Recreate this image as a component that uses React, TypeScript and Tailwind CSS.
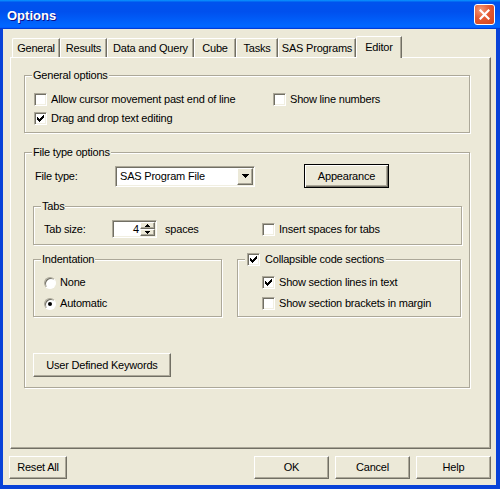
import type { ReactNode } from "react";

// classic 3D edge styles
const raised =
  "border border-t-white border-l-white border-r-[#716f64] border-b-[#716f64] shadow-[inset_-1px_-1px_0_#aca899] bg-[#ece9d8]";
const sunken =
  "border border-t-[#aca899] border-l-[#aca899] border-r-white border-b-white shadow-[inset_1px_1px_0_#716f64,inset_-1px_-1px_0_#f1efe2]";
const etched = "border border-[#aca899] shadow-[inset_1px_1px_0_#fff,1px_1px_0_#fff]";

// 7x7 pixel check glyph, [x, y, width]
const CHECK: [number, number, number][] = [
  [6, 0, 1],
  [5, 1, 2],
  [0, 2, 1],
  [4, 2, 3],
  [0, 3, 2],
  [3, 3, 3],
  [0, 4, 5],
  [1, 5, 3],
  [2, 6, 1],
];

const tabs = [
  { label: "General", w: "w-[48px]" },
  { label: "Results", w: "w-[47px]" },
  { label: "Data and Query", w: "w-[87px]" },
  { label: "Cube", w: "w-[42px]" },
  { label: "Tasks", w: "w-[42px]" },
  { label: "SAS Programs", w: "w-[78px]" },
];

function CheckBox({ checked }: { checked?: boolean }) {
  return (
    <span className={`flex h-[13px] w-[13px] shrink-0 items-center justify-center bg-white ${sunken}`}>
      {checked && (
        <svg width="7" height="7" viewBox="0 0 7 7" shapeRendering="crispEdges">
          {CHECK.map(([x, y, w]) => (
            <rect key={`${x}-${y}`} x={x} y={y} width={w} height={1} fill="#000" />
          ))}
        </svg>
      )}
    </span>
  );
}

function Check({ checked, gap = "gap-[4px]", children }: { checked?: boolean; gap?: string; children: ReactNode }) {
  return (
    <div className={`flex h-[13px] items-center ${gap}`}>
      <CheckBox checked={checked} />
      <span className="whitespace-nowrap">{children}</span>
    </div>
  );
}

function Radio({ checked, children }: { checked?: boolean; children: ReactNode }) {
  return (
    <div className="flex h-[13px] items-center gap-[4px]">
      <span className="flex h-[12px] w-[12px] shrink-0 items-center justify-center rounded-full border border-t-[#aca899] border-l-[#aca899] border-r-white border-b-white bg-white shadow-[inset_1px_1px_0_#716f64]">
        {checked && <span className="h-[4px] w-[4px] rounded-full bg-black" />}
      </span>
      <span className="whitespace-nowrap">{children}</span>
    </div>
  );
}

function Legend({ children }: { children: ReactNode }) {
  return <div className="-mt-[7px] ml-[7px] h-[13px] w-fit bg-[#ece9d8] px-[1px]">{children}</div>;
}

function Combo() {
  return (
    <div className={`flex h-[21px] w-[140px] bg-white p-[1px] ${sunken}`}>
      <span className="flex flex-1 items-center pl-[3px]">SAS Program File</span>
      <span className={`flex w-[16px] items-center justify-center ${raised}`}>
        <svg width="7" height="4" viewBox="0 0 7 4" shapeRendering="crispEdges">
          <path d="M0 0h7L3.5 4z" fill="#000" />
        </svg>
      </span>
    </div>
  );
}

function Spinner() {
  return (
    <div className={`flex h-[18px] w-[45px] bg-white p-[1px] ${sunken}`}>
      <span className="flex flex-1 items-center justify-end pr-[1px]">4</span>
      <div className="flex w-[15px] flex-col">
        <span className={`flex flex-1 items-center justify-center ${raised}`}>
          <svg width="5" height="3" viewBox="0 0 5 3" shapeRendering="crispEdges">
            <path d="M2 0h1v1h1v1h1v1H0V2h1V1h1z" fill="#000" />
          </svg>
        </span>
        <span className={`flex flex-1 items-center justify-center ${raised}`}>
          <svg width="5" height="3" viewBox="0 0 5 3" shapeRendering="crispEdges">
            <path d="M0 0h5v1H4v1H3v1H2V2H1V1H0z" fill="#000" />
          </svg>
        </span>
      </div>
    </div>
  );
}

function Button({ className, children }: { className: string; children: ReactNode }) {
  return <button type="button" className={`text-center ${raised} ${className}`}>{children}</button>;
}

export default function App() {
  return (
    <div className="flex h-[489px] w-[500px] flex-col bg-[#0842d8] font-['Liberation_Sans',Arial,sans-serif] text-[11px] leading-[13px] tracking-[-0.2px] text-black">
      {/* title bar */}
      <div className="flex h-[29px] items-center justify-between bg-[linear-gradient(180deg,#0997ff,#0053ee_8%,#0050ee_40%,#06f_88%,#06f_93%,#005bff_95%,#003dd7_96%,#003dd7)] pl-[7px] pr-[5px]">
        <span className="pt-[2px] text-[13px] font-bold leading-[16px] tracking-normal text-white [text-shadow:1px_1px_0_#0f1089]">
          Options
        </span>
        <span className="flex h-[21px] w-[21px] items-center justify-center rounded-[3px] border border-white bg-[radial-gradient(circle_at_30%_25%,#f59a78_0%,#e45a33_45%,#d2431c_100%)]">
          <svg width="11" height="11" viewBox="0 0 11 11">
            <path d="M1.5 1.5l8 8M9.5 1.5l-8 8" stroke="#fff" strokeWidth="2.2" strokeLinecap="square" />
          </svg>
        </span>
      </div>

      <div className="mb-[4px] ml-[3px] mr-[4px] flex flex-1 flex-col bg-[#ece9d8] pt-[7px]">
        <div className="ml-[7px] w-[481px]">
          {/* tab strip */}
          <div className="flex h-[21px] items-end pl-[2px]">
            {tabs.map((t) => (
              <div
                key={t.label}
                className={`flex h-[19px] items-center justify-center whitespace-nowrap rounded-tl-[2px] border-l border-t border-r border-l-white border-t-white border-r-[#716f64] pt-[1px] shadow-[inset_-1px_0_0_#aca899] ${t.w}`}
              >
                {t.label}
              </div>
            ))}
            <div className="relative z-10 -mb-[1px] flex h-[22px] w-[46px] items-center justify-center rounded-tl-[2px] border-l border-t border-r border-l-white border-t-white border-r-[#716f64] bg-[#ece9d8] shadow-[inset_-1px_0_0_#aca899]">
              Editor
            </div>
          </div>

          {/* tab page */}
          <div className="h-[392px] w-[481px] border border-l-white border-t-white border-r-[#716f64] border-b-[#716f64] shadow-[inset_-1px_-1px_0_#aca899]">
            <div className={`ml-[13px] mt-[17px] h-[58px] w-[446px] ${etched}`}>
              <Legend>General options</Legend>
              <div className="mt-[11px] flex pl-[9px]">
                <div className="w-[239px]">
                  <Check>Allow cursor movement past end of line</Check>
                </div>
                <Check>Show line numbers</Check>
              </div>
              <div className="mt-[6px] pl-[9px]">
                <Check checked>Drag and drop text editing</Check>
              </div>
            </div>

            <div className={`ml-[13px] mt-[19px] h-[236px] w-[446px] ${etched}`}>
              <Legend>File type options</Legend>
              <div className="mt-[5px] flex h-[24px] items-center pl-[10px]">
                <span className="w-[80px]">File type:</span>
                <Combo />
                <button
                  type="button"
                  className="ml-[49px] h-[24px] w-[85px] border border-black bg-[#ece9d8] text-center shadow-[inset_1px_1px_0_#fff,inset_-1px_-1px_0_#716f64,inset_-2px_-2px_0_#aca899]"
                >
                  Appearance
                </button>
              </div>

              <div className={`ml-[8px] mt-[18px] h-[39px] w-[429px] ${etched}`}>
                <Legend>Tabs</Legend>
                <div className="mt-[7px] flex h-[18px] items-center pl-[10px]">
                  <span className="w-[68px]">Tab size:</span>
                  <Spinner />
                  <span className="ml-[8px] w-[97px]">spaces</span>
                  <Check>Insert spaces for tabs</Check>
                </div>
              </div>

              <div className="ml-[8px] mt-[14px] flex">
                <div className={`h-[58px] w-[189px] ${etched}`}>
                  <Legend>Indentation</Legend>
                  <div className="mt-[10px] pl-[10px]">
                    <Radio>None</Radio>
                  </div>
                  <div className="mt-[8px] pl-[10px]">
                    <Radio checked>Automatic</Radio>
                  </div>
                </div>
                <div className={`ml-[15px] h-[58px] w-[224px] ${etched}`}>
                  <div className="-mt-[7px] ml-[7px] w-fit bg-[#ece9d8] px-[2px]">
                    <Check checked gap="gap-[5px]">
                      Collapsible code sections
                    </Check>
                  </div>
                  <div className="mt-[10px] pl-[24px]">
                    <Check checked>Show section lines in text</Check>
                  </div>
                  <div className="mt-[8px] pl-[24px]">
                    <Check>Show section brackets in margin</Check>
                  </div>
                </div>
              </div>

              <Button className="ml-[8px] mt-[36px] h-[24px] w-[138px]">User Defined Keywords</Button>
            </div>
          </div>
        </div>

        {/* dialog buttons */}
        <div className="mt-[7px] flex h-[23px] pl-[6px] pr-[5px]">
          <Button className="h-[23px] w-[58px]">Reset All</Button>
          <div className="ml-auto flex gap-[6px]">
            <Button className="h-[23px] w-[75px]">OK</Button>
            <Button className="h-[23px] w-[75px]">Cancel</Button>
            <Button className="h-[23px] w-[75px]">Help</Button>
          </div>
        </div>
      </div>
    </div>
  );
}
